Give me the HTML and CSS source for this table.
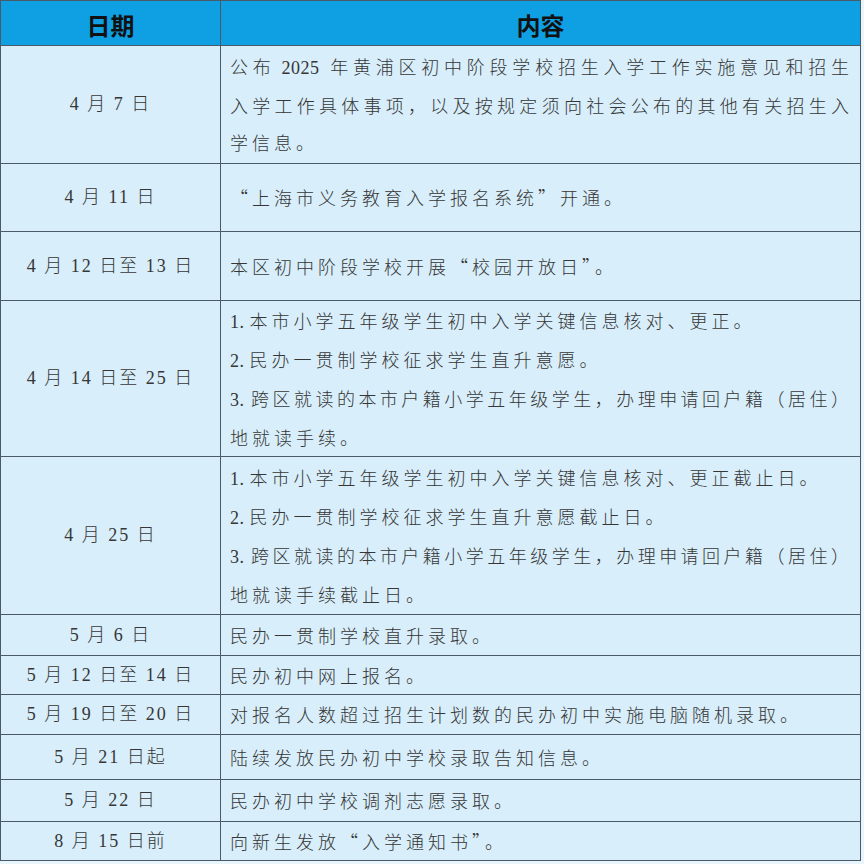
FILE: index.html
```html
<!DOCTYPE html>
<html lang="zh-CN">
<head>
<meta charset="utf-8">
<title>2025 年黄浦区初中招生入学工作日程</title>
<link rel="stylesheet" href="styles.css">
</head>
<body>
<table class="schedule">
  <colgroup><col class="col-date"><col class="col-text"></colgroup>
  <thead>
    <tr class="head"><th>日期</th><th>内容</th></tr>
  </thead>
  <tbody>
    <tr class="h118">
      <td class="date">4 月 7 日</td>
      <td class="text"><span class="fill">公布<span class="num">2025</span>年黄浦区初中阶段学校招生入学工作实施意见和招生</span><span class="fill">入学工作具体事项，以及按规定须向社会公布的其他有关招生入</span>学信息。</td>
    </tr>
    <tr class="h68">
      <td class="date">4 月 11 日</td>
      <td class="text">“上海市义务教育入学报名系统”开通。</td>
    </tr>
    <tr class="h69">
      <td class="date">4 月 12 日至 13 日</td>
      <td class="text">本区初中阶段学校开展“校园开放日”。</td>
    </tr>
    <tr class="h156">
      <td class="date">4 月 14 日至 25 日</td>
      <td class="text">
        <p class="item"><span class="idx">1.</span>本市小学五年级学生初中入学关键信息核对、更正。</p>
        <p class="item"><span class="idx">2.</span>民办一贯制学校征求学生直升意愿。</p>
        <p class="item"><span class="fill"><span class="idx">3.</span>跨区就读的本市户籍小学五年级学生，办理申请回户籍（居住）</span>地就读手续。</p>
      </td>
    </tr>
    <tr class="h158">
      <td class="date">4 月 25 日</td>
      <td class="text">
        <p class="item"><span class="idx">1.</span>本市小学五年级学生初中入学关键信息核对、更正截止日。</p>
        <p class="item"><span class="idx">2.</span>民办一贯制学校征求学生直升意愿截止日。</p>
        <p class="item"><span class="fill"><span class="idx">3.</span>跨区就读的本市户籍小学五年级学生，办理申请回户籍（居住）</span>地就读手续截止日。</p>
      </td>
    </tr>
    <tr class="h41">
      <td class="date">5 月 6 日</td>
      <td class="text">民办一贯制学校直升录取。</td>
    </tr>
    <tr class="h39">
      <td class="date">5 月 12 日至 14 日</td>
      <td class="text">民办初中网上报名。</td>
    </tr>
    <tr class="h40">
      <td class="date">5 月 19 日至 20 日</td>
      <td class="text">对报名人数超过招生计划数的民办初中实施电脑随机录取。</td>
    </tr>
    <tr class="h45">
      <td class="date">5 月 21 日起</td>
      <td class="text">陆续发放民办初中学校录取告知信息。</td>
    </tr>
    <tr class="h42">
      <td class="date">5 月 22 日</td>
      <td class="text">民办初中学校调剂志愿录取。</td>
    </tr>
    <tr class="h39">
      <td class="date">8 月 15 日前</td>
      <td class="text">向新生发放“入学通知书”。</td>
    </tr>
  </tbody>
</table>
</body>
</html>
```
FILE: styles.css
```css
html, body {
  margin: 0;
  padding: 0;
  background: #e8f5fc;
}

.schedule {
  width: 861px;
  border-collapse: collapse;
  table-layout: fixed;
  background: #d8eefa;
  color: #363636;
}

.col-date { width: 220px; }

.schedule th,
.schedule td {
  border: 1.5px solid #4a5a68;
  padding: 0;
  vertical-align: middle;
}

.head th {
  height: 45px;
  padding-top: 4px;
  box-sizing: border-box;
  background: #0f9fe3;
  color: #111;
  font-family: "Noto Sans CJK SC", sans-serif;
  font-weight: 700;
  font-size: 24px;
  line-height: 1;
  text-align: center;
}

.date {
  text-align: center;
  font-family: "Liberation Serif", "Noto Sans CJK SC", serif;
  font-weight: 300;
  font-size: 18px;
  letter-spacing: 2px;
  line-height: 37px;
}

.text {
  padding: 0 9px !important;
  font-family: "Noto Sans CJK SC", sans-serif;
  font-weight: 300;
  font-size: 18px;
  line-height: 37px;
  letter-spacing: 4px;
  text-align: left;
}

.fill {
  display: block;
  letter-spacing: 2px;
  text-align: justify;
  text-align-last: justify;
}

.num {
  font-family: "Liberation Serif", serif;
  font-weight: 400;
  letter-spacing: 0.5px;
  margin: 0 8px 0 6px;
}

.idx {
  font-family: "Liberation Serif", serif;
  font-weight: 400;
  letter-spacing: 0.5px;
  margin-right: 5px;
}

.item { margin: 0; }

.h118 { height: 118px; }
.h68 { height: 68px; }
.h69 { height: 69px; }
.h156 { height: 156px; }
.h158 { height: 158px; }
.h45 { height: 45px; }
.h42 { height: 42px; }
.h41 { height: 41px; }
.h40 { height: 40px; }
.h39 { height: 39px; }
```
